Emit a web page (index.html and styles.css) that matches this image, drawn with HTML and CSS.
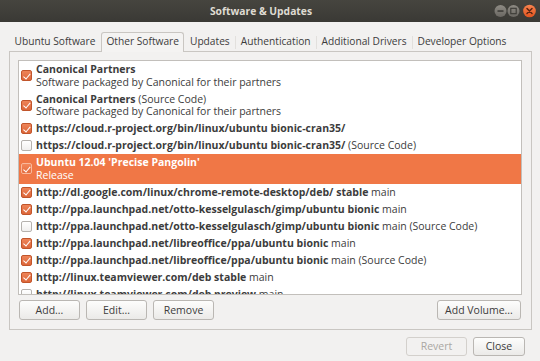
FILE: index.html
```html
<!DOCTYPE html>
<html>
<head>
<meta charset="utf-8">
<title>Software &amp; Updates</title>
<link rel="stylesheet" href="styles.css">
</head>
<body>
<div class="window">
  <div class="titlebar">
    <div class="title">Software &amp; Updates</div>
    <svg class="wm" width="48" height="22" viewBox="0 0 48 22">
      <defs>
        <linearGradient id="gg" x1="0" y1="0" x2="0" y2="1">
          <stop offset="0" stop-color="#8e8b84"/>
          <stop offset="1" stop-color="#6a6762"/>
        </linearGradient>
        <linearGradient id="og" x1="0" y1="0" x2="0" y2="1">
          <stop offset="0" stop-color="#f7844f"/>
          <stop offset="1" stop-color="#e3541f"/>
        </linearGradient>
      </defs>
      <circle cx="8.5" cy="11" r="6" fill="url(#gg)"/>
      <rect x="5.5" y="10.3" width="6" height="1.5" fill="#3b3a36"/>
      <circle cx="21.5" cy="11" r="6" fill="url(#gg)"/>
      <rect x="18.8" y="8.3" width="5.4" height="5.4" fill="none" stroke="#3b3a36" stroke-width="1.1"/>
      <circle cx="37.5" cy="11" r="6.3" fill="url(#og)"/>
      <path d="M35 8.5 L40 13.5 M40 8.5 L35 13.5" stroke="#5a2412" stroke-width="1.5" stroke-linecap="round"/>
    </svg>
  </div>
  <div class="content">
    <div class="tabs">
      <div class="tab">Ubuntu Software</div>
      <div class="tab active">Other Software</div>
      <div class="tab">Updates</div>
      <div class="tab">Authentication</div>
      <div class="tab">Additional Drivers</div>
      <div class="tab">Developer Options</div>
    </div>
    <div class="panel">
      <div class="list">
        <div class="row two">
          <span class="cb on"></span>
          <div class="text"><div class="line"><b>Canonical Partners</b></div><div class="line">Software packaged by Canonical for their partners</div></div>
        </div>
        <div class="row two">
          <span class="cb on"></span>
          <div class="text"><div class="line"><b>Canonical Partners</b> (Source Code)</div><div class="line">Software packaged by Canonical for their partners</div></div>
        </div>
        <div class="row">
          <span class="cb on"></span>
          <div class="text"><div class="line"><b>https://cloud.r-project.org/bin/linux/ubuntu bionic-cran35/</b></div></div>
        </div>
        <div class="row">
          <span class="cb"></span>
          <div class="text"><div class="line"><b>https://cloud.r-project.org/bin/linux/ubuntu bionic-cran35/</b> (Source Code)</div></div>
        </div>
        <div class="row two selected">
          <span class="cb on"></span>
          <div class="text"><div class="line"><b>Ubuntu 12.04 'Precise Pangolin'</b></div><div class="line">Release</div></div>
        </div>
        <div class="row">
          <span class="cb on"></span>
          <div class="text"><div class="line"><b>http://dl.google.com/linux/chrome-remote-desktop/deb/ stable</b> main</div></div>
        </div>
        <div class="row">
          <span class="cb on"></span>
          <div class="text"><div class="line"><b>http://ppa.launchpad.net/otto-kesselgulasch/gimp/ubuntu bionic</b> main</div></div>
        </div>
        <div class="row">
          <span class="cb"></span>
          <div class="text"><div class="line"><b>http://ppa.launchpad.net/otto-kesselgulasch/gimp/ubuntu bionic</b> main (Source Code)</div></div>
        </div>
        <div class="row">
          <span class="cb on"></span>
          <div class="text"><div class="line"><b>http://ppa.launchpad.net/libreoffice/ppa/ubuntu bionic</b> main</div></div>
        </div>
        <div class="row">
          <span class="cb on"></span>
          <div class="text"><div class="line"><b>http://ppa.launchpad.net/libreoffice/ppa/ubuntu bionic</b> main (Source Code)</div></div>
        </div>
        <div class="row">
          <span class="cb on"></span>
          <div class="text"><div class="line"><b>http://linux.teamviewer.com/deb stable</b> main</div></div>
        </div>
        <div class="row">
          <span class="cb"></span>
          <div class="text"><div class="line"><b>http://linux.teamviewer.com/deb preview</b> main</div></div>
        </div>
      </div>
      <div class="actions">
        <button class="btn w61">Add...</button>
        <button class="btn w61">Edit...</button>
        <button class="btn w61">Remove</button>
        <span class="spacer"></span>
        <button class="btn vol">Add Volume...</button>
      </div>
    </div>
    <div class="footer">
      <button class="btn revert" disabled>Revert</button>
      <button class="btn close">Close</button>
    </div>
  </div>
</div>
</body>
</html>
```

FILE: styles.css
```css
* { box-sizing: border-box; }
html, body { margin: 0; padding: 0; }
body {
  width: 540px;
  height: 361px;
  overflow: hidden;
  font-family: "Open Sans", "Noto Sans", sans-serif;
  font-size: 10.5px;
  color: #3c3c3c;
  background: #f2f1f0;
}
.window {
  width: 540px;
  height: 361px;
  display: flex;
  flex-direction: column;
  background: #f2f1f0;
}
.titlebar {
  height: 22px;
  flex: none;
  display: grid;
  grid-template-columns: 1fr;
  align-items: center;
  background: linear-gradient(#46453f, #3a3935);
}
.title {
  grid-area: 1 / 1;
  text-align: center;
  padding-right: 18px;
  color: #dfdbd2;
  font-weight: bold;
  font-size: 10.3px;
  line-height: 22px;
}
.wm {
  grid-area: 1 / 1;
  justify-self: end;
  display: block;
}
.content {
  flex: 1;
  display: flex;
  flex-direction: column;
}
.tabs {
  display: flex;
  margin: 10px 0 0 9px;
  height: 20px;
  margin-bottom: -1px;
  position: relative;
  z-index: 1;
  font-size: 10.2px;
}
.tab {
  height: 20px;
  padding: 0 4.5px 2px;
  line-height: 17px;
  border: 1px solid transparent;
  border-bottom: none;
  border-radius: 3px 3px 0 0;
  white-space: nowrap;
  position: relative;
}
.tab + .tab::before {
  content: "";
  position: absolute;
  left: -1px;
  top: 3px;
  bottom: 3px;
  width: 1px;
  background: #e2e0dd;
}
.tab.active {
  background: #f4f3f2;
  border-color: #c9c6c2;
}
.tab.active::before, .tab.active + .tab::before { display: none; }
.panel {
  margin: 0 8px 0 9px;
  border: 1px solid #c9c6c2;
  padding: 8px 9px 9px 8px;
  background: #f2f1f0;
}
.list {
  height: 235px;
  border: 1px solid #c2bfbb;
  background: #ffffff;
  overflow: hidden;
}
.row {
  display: flex;
  align-items: center;
  padding: 2px 0 2px 2px;
  white-space: nowrap;
}
.line { line-height: 13px; }
.row.two .line { line-height: 12.75px; }
.row b { font-weight: bold; }
.row.selected {
  background: #f07746;
  color: #ffffff;
}
.cb {
  flex: none;
  width: 11px;
  height: 11px;
  margin-right: 4px;
  border: 1px solid #b5b2ae;
  border-radius: 2px;
  background: linear-gradient(#ffffff, #f0efee);
  position: relative;
}
.cb.on {
  border-color: #c1552b;
  background: linear-gradient(#ee8458, #dc6639);
}
.cb.on::after {
  content: "";
  position: absolute;
  left: 3.2px;
  top: 0.6px;
  width: 2.6px;
  height: 5.6px;
  border: solid #ffffff;
  border-width: 0 1.5px 1.5px 0;
  transform: rotate(40deg);
}
.row.selected .cb.on {
  border-color: #f9b89c;
  background: linear-gradient(#f3875a, #e46c3e);
}
.actions {
  display: flex;
  margin-top: 5px;
  gap: 6px;
  padding-left: 1px;
  padding-right: 1px;
}
.spacer { flex: 1; }
.btn {
  height: 20px;
  font-family: inherit;
  font-size: 10.5px;
  color: #3c3c3c;
  border: 1px solid #bab7b3;
  border-radius: 3px;
  background: linear-gradient(#fdfdfc, #ebeae8);
  padding: 0 6px;
  line-height: 17px;
  margin: 0;
}
.w61 { width: 61px; }
.vol { width: 84px; }
.footer {
  display: flex;
  justify-content: flex-end;
  gap: 6px;
  padding: 7px 15px 0 0;
}
.footer .btn { height: 19px; }
.revert {
  width: 61px;
  color: #aaa7a3;
  background: #f2f1f0;
  border-color: #d3d0cc;
}
.close { width: 52px; }
```
